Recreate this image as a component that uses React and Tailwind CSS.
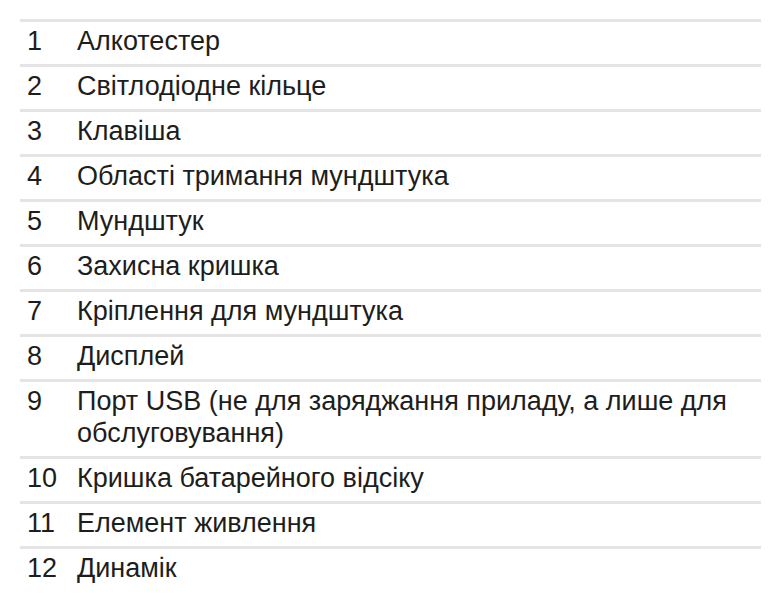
export default function App() {
  const rows = [
    ["1", "Алкотестер"],
    ["2", "Світлодіодне кільце"],
    ["3", "Клавіша"],
    ["4", "Області тримання мундштука"],
    ["5", "Мундштук"],
    ["6", "Захисна кришка"],
    ["7", "Кріплення для мундштука"],
    ["8", "Дисплей"],
    ["9", "Порт USB (не для заряджання приладу, а лише для обслуговування)"],
    ["10", "Кришка батарейного відсіку"],
    ["11", "Елемент живлення"],
    ["12", "Динамік"],
  ];
  return (
    <div
      className="w-[782px] h-[606px] bg-white pt-[19px] pl-[20px] text-[#1d1d1b]"
      style={{ fontFamily: '"Liberation Sans", Arial, sans-serif' }}
    >
      <div className="w-[741px] flex flex-col">
        {rows.map(([n, t]) => (
          <div key={n} className="flex border-t-[3px] border-[#e4e4e4] pt-[3px] pb-[7px] text-[27px] leading-[32px]">
            <div className="w-[57px] shrink-0 pl-[7px]">{n}</div>
            <div className="flex-1">{t}</div>
          </div>
        ))}
      </div>
    </div>
  );
}
